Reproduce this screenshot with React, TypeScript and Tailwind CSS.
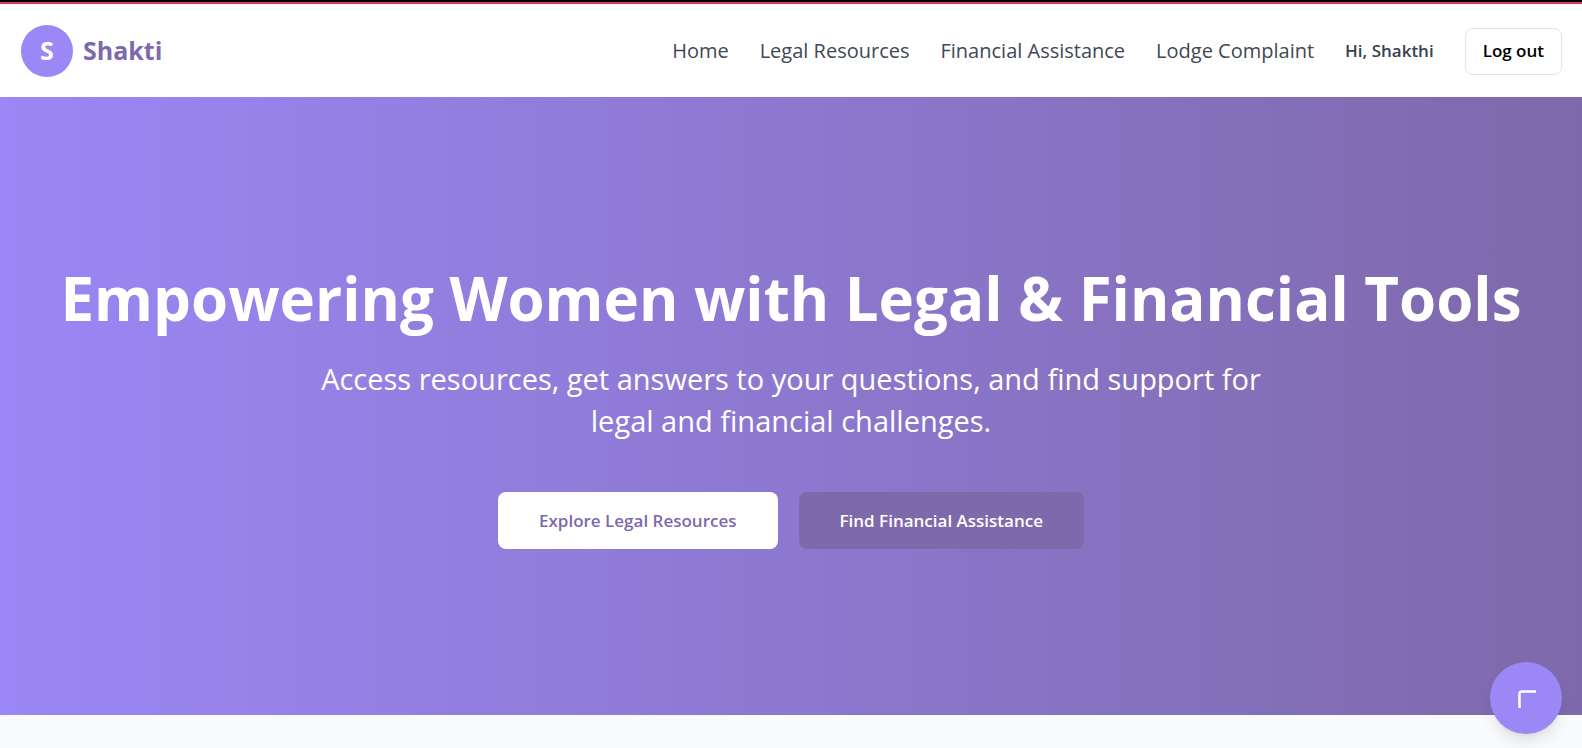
const links = ["Home", "Legal Resources", "Financial Assistance", "Lodge Complaint"];

export default function App() {
  return (
    <div className="flex min-h-screen flex-col bg-[#f8fafc] font-['Open_Sans','Noto_Sans',sans-serif]">
      <header className="border-t-2 border-black bg-white">
        <div className="flex items-center justify-between border-t-2 border-[#d5405c] pt-[21px] pr-5 pb-5 pl-[21px]">
          <a href="#home" className="flex items-center gap-2.5">
            <span className="flex size-13 items-center justify-center rounded-full bg-[#9b87f5] text-[25px] font-bold text-white">
              S
            </span>
            <span className="text-[25px] font-bold text-[#7e69ab]">Shakti</span>
          </a>
          <nav className="flex items-center gap-[31px] text-[20px] text-[#3f4855]">
            {links.map((label) => (
              <a key={label} href="#section">
                {label}
              </a>
            ))}
            <span className="text-[17px] font-semibold text-[#374151]">Hi, Shakthi</span>
            <button className="h-[47px] rounded-lg border border-[#e2e4e8] px-[17px] text-[17px] font-semibold text-black">
              Log out
            </button>
          </nav>
        </div>
      </header>
      <main>
        <section className="flex flex-col items-center bg-linear-to-r from-[#9b87f5] to-[#7e69ab] px-5 pt-[165px] pb-[166px] text-center text-white">
          <h1 className="text-[60px] leading-[72px] font-bold">
            Empowering Women with Legal &amp; Financial Tools
          </h1>
          <p className="mt-6 max-w-[960px] text-[29px] leading-[42px]">
            Access resources, get answers to your questions, and find support for legal and financial challenges.
          </p>
          <div className="mt-[50px] flex gap-[21px]">
            <button className="h-[57px] rounded-lg bg-white px-[41px] text-[17px] font-semibold text-[#7e69ab]">
              Explore Legal Resources
            </button>
            <button className="h-[57px] rounded-lg bg-[#7e69ab] px-[41px] text-[17px] font-semibold text-white">
              Find Financial Assistance
            </button>
          </div>
        </section>
      </main>
      <button
        aria-label="Open chat"
        className="fixed right-5 bottom-3.5 flex size-18 items-center justify-center rounded-full bg-[#9b87f5] text-white shadow-lg"
      >
        <svg width="32" height="32" viewBox="0 0 32 32" fill="none" stroke="currentColor" strokeWidth="2.6">
          <path d="M9.5 26V12a2.5 2.5 0 0 1 2.5-2.5h14" />
        </svg>
      </button>
    </div>
  );
}
